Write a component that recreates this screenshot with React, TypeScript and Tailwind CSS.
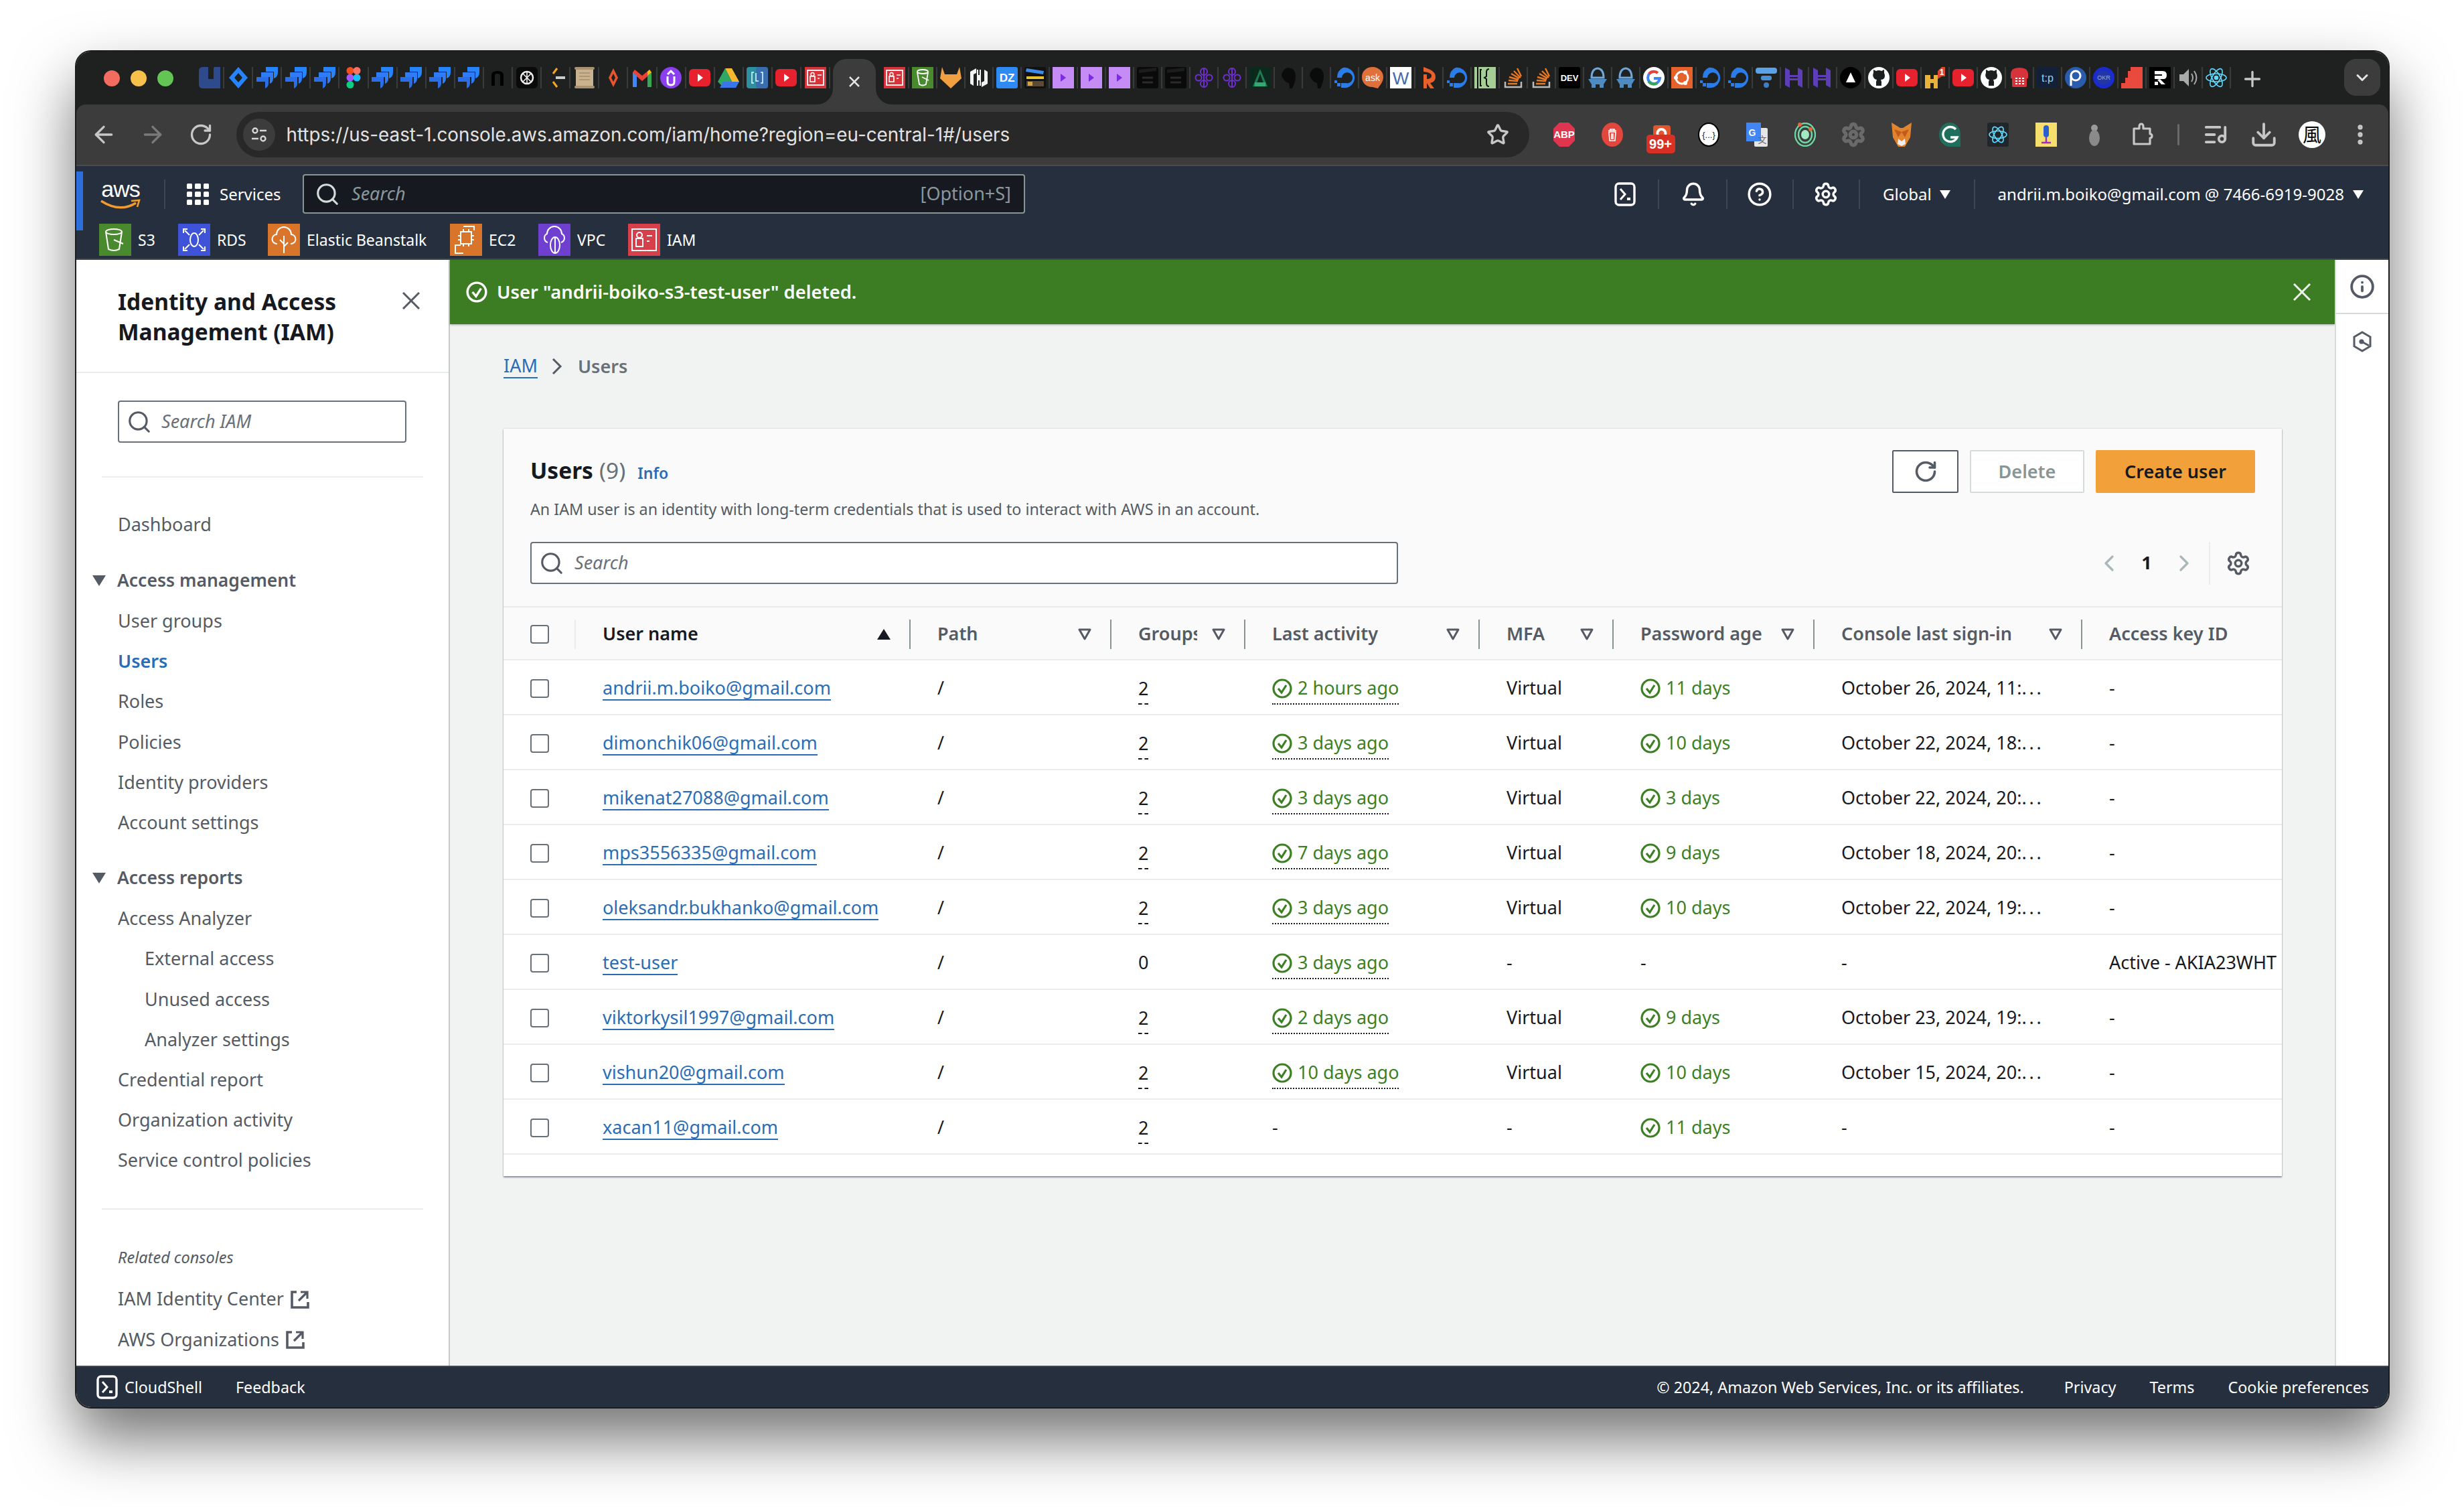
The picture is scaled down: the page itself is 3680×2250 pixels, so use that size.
import React from "react";
import { ArrowLeft, ArrowRight, RotateCw, Star, Download, ListMusic, MoreVertical, ChevronDown, Plus, Search, Bell, CircleHelp, Settings, ChevronLeft, ChevronRight, Info } from "lucide-react";

const ui = { fontFamily: '"Noto Sans", sans-serif' };

const Rect = ({ c, r = 0 }: { c: string; r?: number }) => <rect x="0" y="0" width="32" height="32" rx={r} fill={c} />;

function Fav({ k }: { k: string }) {
  const t = (s: string, size: number, fill: string, x = 16, y = 22, w = 700) => (
    <text x={x} y={y} fontSize={size} fill={fill} fontWeight={w} textAnchor="middle" fontFamily="Liberation Sans, sans-serif">{s}</text>
  );
  let body: React.ReactNode = null;
  switch (k) {
    case "linear": body = <path d="M0 6q0-6 6-6h8v18h8V2q0-2 2-2h8v32H6q-6 0-6-6z" fill="#2f4a8a" />; break;
    case "diamond": body = <><path d="M16 0l14 16-14 16L2 16z" fill="#2684ff" /><path d="M16 9l6 7-6 7-6-7z" fill="#1f2120" /></>; break;
    case "jira": body = <><path d="M14 0h18v8q0 7-6 9V7H14z" fill="#2684ff" /><path d="M7 8h18v9q0 6-5 8V15H7z" fill="#2f7cf6" /><path d="M0 15h18v9q0 6-5 8V22H0z" fill="#2a6fe8" /></>; break;
    case "figma": body = <><circle cx="11" cy="5.5" r="5.5" fill="#f24e1e" /><circle cx="21" cy="5.5" r="5.5" fill="#ff7262" /><circle cx="11" cy="16" r="5.5" fill="#a259ff" /><circle cx="21" cy="16" r="5.5" fill="#1abcfe" /><circle cx="11" cy="26.5" r="5.5" fill="#0acf83" /></>; break;
    case "notion": body = <path d="M7 28V12q0-6 9-6t9 6v16h-5V12q0-2-4-2t-4 2v16z" fill="#000" />; break;
    case "gpt": body = <><Rect c="#0a0a0a" r={6} /><circle cx="16" cy="16" r="9" fill="none" stroke="#eee" strokeWidth="2.5" /><path d="M10 10l12 12M22 10L10 22M16 7v18" stroke="#eee" strokeWidth="1.6" /></>; break;
    case "brack": body = <><path d="M10 2L3 16l7 14" fill="none" stroke="#222" strokeWidth="2" /><path d="M18 2l-6 8M18 30l-6-8" stroke="#f5a623" strokeWidth="3" /><rect x="16" y="14" width="14" height="4" fill="#ccc" /></>; break;
    case "scroll": body = <><rect x="3" y="2" width="26" height="28" fill="#c9b28f" /><rect x="1" y="0" width="30" height="4" rx="2" fill="#a89270" /><rect x="1" y="28" width="30" height="4" rx="2" fill="#a89270" /><path d="M8 9h16M8 14h16M8 19h16" stroke="#a68d68" strokeWidth="1.5" /></>; break;
    case "star4": body = <><path d="M16 2l7 14-7 14-7-14z" fill="#e8552c" /><path d="M16 10l3 6-3 6-3-6z" fill="#1f2120" /></>; break;
    case "gmail": body = <><path d="M2 8v22h6V14l8 7 8-7v16h6V8l-3-4-11 9L5 4z" fill="#ea4335" /><path d="M2 8v22h6V13z" fill="#4285f4" /><path d="M30 8v22h-6V13z" fill="#34a853" /><path d="M24 13l6-5-3-4-3 3z" fill="#fbbc04" /></>; break;
    case "upw": body = <><circle cx="16" cy="16" r="16" fill="#8a3ff0" /><path d="M11 14v8q0 5 5 5t5-5v-8M11 11l5-5 5 5" fill="none" stroke="#fff" strokeWidth="3" /></>; break;
    case "yt": body = <><rect x="0" y="3" width="32" height="26" rx="6" fill="#e8212f" /><path d="M13 10l8 6-8 6z" fill="#fff" /></>; break;
    case "drive": body = <><path d="M11 2h10l11 20H21z" fill="#f6b82d" /><path d="M11 2l10 20-5 9H9L0 22z" fill="#2fa866" /><path d="M8 22h24l-5 9H3z" fill="#3a76e8" /></>; break;
    case "lk": body = <><rect width="32" height="32" rx="4" fill="#2c8e9e" /><rect x="14" width="18" height="32" rx="4" fill="#3f5fb8" opacity=".7" /><path d="M11 8H8v16h3M21 8h3v16h-3M14 9v12h4" fill="none" stroke="#dff" strokeWidth="1.5" /></>; break;
    case "iam": body = <><Rect c="#d6333a" /><rect x="4" y="5" width="24" height="22" fill="none" stroke="#fff" strokeWidth="1.8" /><rect x="8" y="14" width="7" height="8" fill="none" stroke="#fff" strokeWidth="1.6" /><circle cx="11.5" cy="11" r="2.5" fill="none" stroke="#fff" strokeWidth="1.4" /><path d="M19 12h6M19 17h3" stroke="#fff" strokeWidth="1.6" /></>; break;
    case "s3": body = <><Rect c="#4a8a2e" /><path d="M8 8l3 18q5 3 10 0l3-18" fill="none" stroke="#fff" strokeWidth="1.8" /><ellipse cx="16" cy="7" rx="8" ry="3" fill="none" stroke="#fff" strokeWidth="1.8" /><path d="M15 15l10 5" stroke="#fff" strokeWidth="1.4" /></>; break;
    case "gitlab": body = <path d="M3 0l4 11h18l4-11 3 17-16 15L0 17z" fill="#f0a040" />; break;
    case "hashi": body = <><path d="M12 2L3 7v18l5 3V11l4-2zM20 30l9-5V7l-5-3v17l-4 2z" fill="#f2f2f2" /><path d="M13 12h6v8h-6z" fill="#f2f2f2" /><path d="M14 4v24M18 4v24" stroke="#f2f2f2" strokeWidth="2" /></>; break;
    case "dz": body = <><Rect c="#2e8bf5" r={3} />{t("DZ", 17, "#fff", 16, 22)}</>; break;
    case "clap": body = <><rect width="32" height="32" rx="3" fill="#111" /><path d="M3 2l26 4-1 5-26-4z" fill="#3d8bea" /><rect x="3" y="14" width="26" height="4" fill="#e8c231" /><rect x="3" y="21" width="26" height="8" fill="#5b4a36" /><rect x="5" y="22" width="7" height="6" fill="#d9a13a" /></>; break;
    case "play": body = <><Rect c="#c58cf5" /><path d="M12 10l8 6-8 6z" fill="#7b2be0" /></>; break;
    case "clapb": body = <><rect width="32" height="32" rx="3" fill="#0a0a0a" /><path d="M3 4l26-3v5L3 9z" fill="#1c1c1c" /><path d="M8 16h16M8 23h16" stroke="#2a2a2a" strokeWidth="3" /></>; break;
    case "clover": body = <><g fill="none" stroke="#6f2fd0" strokeWidth="2"><circle cx="16" cy="7" r="5" /><circle cx="16" cy="25" r="5" /><circle cx="8" cy="16" r="4.5" /><circle cx="24" cy="16" r="4.5" /><path d="M16 1v30" /></g></>; break;
    case "gree": body = <><Rect c="#0b2a1d" /><path d="M16 3l11 26H5z" fill="#1f7a50" /><path d="M16 10l5 14H11z" fill="#0b2a1d" /><rect x="8" y="23" width="16" height="6" fill="#35a873" /></>; break;
    case "hood": body = <path d="M16 1q11 1 11 13 0 7-5 18h-4l-1-8-5-2q-6-7-6-10Q8 2 16 1z" fill="#0b0b0b" />; break;
    case "do": body = <path d="M14 1a15 15 0 1 1 4 30v-7a8 8 0 1 0-6-8H5q0-11 9-15zM11 24h7v7h-7zM5 24h5v5H5zM1 20h4v4H1z" fill="#2a7de8" />; break;
    case "ask": body = <><path d="M16 0c9 0 16 7 16 15s-6 13-8 17l-8-2C7 30 0 24 0 15S7 0 16 0z" fill="#e2703a" />{t("ask", 14, "#fff", 16, 21, 400)}</>; break;
    case "w": body = <><Rect c="#fff" />{t("W", 26, "#4169b0", 16, 26, 400)}</>; break;
    case "r": body = <path d="M8 0l10 4q8 4 8 11t-8 9l6 8h-6l-5-8v-6q6 0 7-4t-6-6L8 7zM8 11h5v21H8z" fill="#e9602a" />; break;
    case "bk": body = <><Rect c="#a5cd96" /><path d="M5 0v32M11 4H9v24h2M22 3q-4 0-4 5v6l-3 2 3 2v6q0 5 4 5" fill="none" stroke="#111" strokeWidth="2" /></>; break;
    case "so": body = <><path d="M4 22v8h24v-8" fill="none" stroke="#bbb" strokeWidth="2.5" /><path d="M8 25h14M9 20l14 1M10 15l14 4M13 10l12 7M17 6l10 10M22 2l6 12" stroke="#e87922" strokeWidth="2.4" /></>; break;
    case "dev": body = <><Rect c="#000" r={3} />{t("DEV", 13, "#fff", 16, 21)}</>; break;
    case "ship": body = <><path d="M16 2q9 1 9 14H7Q7 3 16 2z" fill="none" stroke="#6fa7d8" strokeWidth="3" /><path d="M2 18h28l-5 8H7z" fill="#4f8ac0" /><path d="M7 26h6v5H7zM19 26h6v5h-6z" fill="#4f8ac0" /></>; break;
    case "g": body = <><circle cx="16" cy="16" r="16" fill="#fff" /><path d="M16 7a9 9 0 1 0 9 10h-9" fill="none" stroke="#4285f4" strokeWidth="4" /><path d="M9 10a9 9 0 0 1 13-1" fill="none" stroke="#ea4335" strokeWidth="4" /><path d="M8 21a9 9 0 0 0 13 3" fill="none" stroke="#34a853" strokeWidth="4" /></>; break;
    case "ubuntu": body = <><Rect c="#e5622c" /><circle cx="16" cy="16" r="9" fill="none" stroke="#fff" strokeWidth="3" /><circle cx="7" cy="16" r="3" fill="#fff" /><circle cx="21" cy="8" r="3" fill="#fff" /><circle cx="21" cy="24" r="3" fill="#fff" /></>; break;
    case "filter": body = <><rect x="0" y="1" width="32" height="9" rx="4" fill="#5aa3e8" /><rect x="8" y="13" width="16" height="7" rx="3" fill="#4a8fd8" /><circle cx="16" cy="27" r="4" fill="#3f7fc8" /></>; break;
    case "hh": body = <path d="M2 1l7 4v7h12V1l7 4v26l-7-4v-7H9v11l-7-4zM9 15v2h12v-2z" fill="#5c3fb8" />; break;
    case "tri": body = <><circle cx="16" cy="16" r="16" fill="#000" /><path d="M16 8l7 15H9z" fill="#fff" /></>; break;
    case "gh": body = <><circle cx="16" cy="16" r="16" fill="#fff" /><path d="M16 5q-2 0-4 1l-4-2v5q-2 4 1 8 2 2 4 2l-1 3v6h8v-6l-1-3q3 0 5-2 2-4 0-8V4l-4 2q-2-1-4-1z" fill="#1b1f1f" /></>; break;
    case "hpix": body = <><path d="M1 12h8v6h5v-6h6v20h-6v-8H9v8H1z" fill="#e9b23c" /><path d="M20 6l6-6h5v14h-5l-6 4z" fill="#d9482f" />{t("1", 12, "#fff", 26, 12)}</>; break;
    case "phone": body = <><path d="M3 11Q3 1 16 1t13 10v6H3z" fill="#d6333a" /><rect x="5" y="14" width="22" height="16" rx="2" fill="#d6333a" /><path d="M10 17h3M15 17h3M20 17h3M10 21h3M15 21h3M20 21h3M10 25h3M15 25h3M20 25h3" stroke="#fff" strokeWidth="2" /></>; break;
    case "tp": body = <><Rect c="#122038" r={4} />{t("t:p", 16, "#8fd6e8", 16, 22, 400)}</>; break;
    case "p": body = <><circle cx="16" cy="16" r="16" fill="#2a5cab" /><circle cx="16" cy="13" r="7" fill="none" stroke="#fff" strokeWidth="3" /><path d="M9 13v15" stroke="#fff" strokeWidth="3" /></>; break;
    case "okr": body = <><circle cx="16" cy="16" r="16" fill="#1a2bd0" /><circle cx="16" cy="16" r="11" fill="#2236a8" />{t("OKR", 9, "#9ad", 16, 19, 400)}</>; break;
    case "redp": body = <path d="M14 0h18v32H0v-8h6v-8h4V6h4z" fill="#ea4a3e" />; break;
    case "rb": body = <><Rect c="#000" /><path d="M8 6h12q6 0 6 6t-5 6H8v-5h11v-2H8zM16 18l8 8h-6l-6-7zM8 22h5v5H8z" fill="#fff" /></>; break;
    case "speak": body = <><path d="M3 11h6l8-8v26l-8-8H3z" fill="#aaa" /><path d="M21 10q4 6 0 12M25 6q7 10 0 20" fill="none" stroke="#aaa" strokeWidth="2" /></>; break;
    case "react": body = <g fill="none" stroke="#61dafb" strokeWidth="1.6"><ellipse cx="16" cy="16" rx="15" ry="6" /><ellipse cx="16" cy="16" rx="15" ry="6" transform="rotate(60 16 16)" /><ellipse cx="16" cy="16" rx="15" ry="6" transform="rotate(120 16 16)" /><circle cx="16" cy="16" r="2.5" fill="#61dafb" /></g>; break;
  }
  return <svg width="32" height="32" viewBox="0 0 32 32" className="block shrink-0">{body}</svg>;
}

const leftTabs = "linear diamond jira jira jira figma jira jira jira jira notion gpt brack scroll star4 gmail upw yt drive lk yt iam".split(" ");
const rightTabs = "iam s3 gitlab hashi dz clap play play play clapb clapb clover clover gree hood hood do ask w r do bk so so dev ship ship g ubuntu do do filter hh hh tri gh yt hpix yt gh phone tp p okr redp rb speak react".split(" ");

function TabCell({ k, wide }: { k: string; wide?: boolean }) {
  return (
    <div className={`${wide ? "w-[43.1px]" : "w-[42px]"} h-[32px] shrink-0 flex items-center justify-center relative`}>
      <Fav k={k} />
      <div className="w-[2px] h-[32px] bg-[#3a3c3c] absolute -right-[1px] top-0" />
    </div>
  );
}

const Ext = ({ children }: { children: React.ReactNode }) => (
  <div className="w-[72px] h-[48px] shrink-0 flex items-center justify-center relative">{children}</div>
);

const XIcon = ({ size, color, sw = 3 }: { size: number; color: string; sw?: number }) => (
  <svg width={size} height={size} viewBox={`0 0 ${size} ${size}`} className="shrink-0">
    <path d={`M1 1L${size - 1} ${size - 1}M${size - 1} 1L1 ${size - 1}`} stroke={color} strokeWidth={sw} fill="none" />
  </svg>
);

const ShellIcon = () => (
  <svg width="32" height="36" viewBox="0 0 32 36" className="shrink-0">
    <rect x="2" y="2" width="28" height="32" rx="5" fill="none" stroke="#fff" strokeWidth="3.4" />
    <path d="M9 10l7 8-7 8" fill="none" stroke="#fff" strokeWidth="3" />
    <rect x="19" y="23" width="5" height="4" fill="#fff" />
  </svg>
);

function Extensions() {
  return (
    <>
      <Ext><svg width="32" height="36" viewBox="0 0 32 36"><path d="M9 0h14l9 9v18l-9 9H9l-9-9V9z" fill="#e0354f" /><text x="16" y="23" fontSize="15" fontWeight="700" fill="#fff" textAnchor="middle" fontFamily="Liberation Sans">ABP</text></svg></Ext>
      <Ext><svg width="32" height="36" viewBox="0 0 32 36"><ellipse cx="16" cy="18" rx="16" ry="18" fill="#e2463c" /><path d="M10 12h12M13 12v-2h6v2M11 14l1 13h8l1-13zM15 16v9M17 16v9" fill="none" stroke="#fff" strokeWidth="1.6" /></svg></Ext>
      <Ext>
        <svg width="26" height="22" viewBox="0 0 26 22" className="absolute top-[10px] left-[25px]"><rect width="26" height="22" rx="4" fill="#e2562f" /><path d="M18 14a6 6 0 1 0-10 2" fill="none" stroke="#fff" strokeWidth="4" /></svg>
        <span className="absolute top-[24px] left-[15px] h-[28px] w-[43px] bg-[#d93025] rounded-[5px] text-white text-[20px] font-bold leading-[28px] text-center" style={{ fontFamily: "Liberation Sans, sans-serif" }}>99+</span>
      </Ext>
      <Ext><svg width="32" height="36" viewBox="0 0 32 36"><ellipse cx="16" cy="18" rx="15" ry="17" fill="#fff" stroke="#000" strokeWidth="2" /><text x="16" y="23" fontSize="13" textAnchor="middle" fill="#222" fontFamily="Liberation Sans">{"{...}"}</text></svg></Ext>
      <Ext><svg width="32" height="36" viewBox="0 0 32 36"><rect x="12" y="8" width="20" height="28" rx="2" fill="#e6e6e6" /><path d="M0 0h22v28H8v0H0z" fill="#4285f4" /><text x="9" y="20" fontSize="14" fontWeight="700" fill="#fff" textAnchor="middle" fontFamily="Liberation Sans">G</text><text x="24" y="30" fontSize="13" fill="#666" textAnchor="middle" fontFamily="Noto Sans CJK SC">文</text></svg></Ext>
      <Ext><svg width="32" height="36" viewBox="0 0 32 36"><g fill="none" stroke="#6fd7a6" strokeWidth="2.4"><ellipse cx="16" cy="18" rx="15" ry="17" /><ellipse cx="16" cy="18" rx="10" ry="12" /></g><ellipse cx="16" cy="18" rx="6" ry="7" fill="#a3e8c3" /><circle cx="8" cy="3" r="3" fill="#e26a3e" /><circle cx="24" cy="10" r="3" fill="#e26a3e" /></svg></Ext>
      <Ext><Settings size={38} strokeWidth={3.4} className="text-[#6a6a6a]" /></Ext>
      <Ext><svg width="32" height="36" viewBox="0 0 32 36"><path d="M1 0l13 8h4l13-8-2 22-8 14H11L3 22z" fill="#e2832d" /><path d="M11 24l5 4 5-4 1 8-6 3-6-3z" fill="#eee" /><path d="M5 10l6 12 5-8zM27 10l-6 12-5-8z" fill="#c05b1c" /></svg></Ext>
      <Ext><svg width="32" height="36" viewBox="0 0 32 36"><path d="M16 0a16 18 0 1 0 0 36h16V18A16 18 0 0 0 16 0z" fill="#1f6f5c" /><path d="M25 10a11 11 0 1 0 2 12h-10" fill="none" stroke="#fff" strokeWidth="3.4" /></svg></Ext>
      <Ext><svg width="32" height="36" viewBox="0 0 32 36"><rect width="32" height="36" rx="3" fill="#20262b" /><g fill="none" stroke="#61dafb" strokeWidth="1.6"><ellipse cx="16" cy="18" rx="13" ry="5.5" /><ellipse cx="16" cy="18" rx="13" ry="5.5" transform="rotate(60 16 18)" /><ellipse cx="16" cy="18" rx="13" ry="5.5" transform="rotate(120 16 18)" /></g></svg></Ext>
      <Ext><svg width="32" height="36" viewBox="0 0 32 36"><rect width="32" height="36" fill="#f7df6e" /><rect x="12" y="4" width="8" height="18" rx="4" fill="#2a5fd0" /><path d="M16 22v8M9 30h14" stroke="#a02bc0" strokeWidth="2.5" /></svg></Ext>
      <Ext><svg width="32" height="36" viewBox="0 0 32 36"><circle cx="16" cy="8" r="5" fill="#9a9a9a" /><ellipse cx="16" cy="23" rx="8" ry="12" fill="#8a8a8a" /></svg></Ext>
      <Ext><svg width="32" height="36" viewBox="0 0 32 36"><path d="M3 9h8V6q0-4 3-4t3 4v3h10v8q3 0 3 3t-3 3v9H3z" fill="none" stroke="#c7c7c7" strokeWidth="3.2" strokeLinejoin="round" /></svg></Ext>
      <div className="w-[3px] h-[32px] bg-[#6a6a6a] ml-[16px] mr-[18px] shrink-0 rounded-full" />
      <Ext><ListMusic size={38} strokeWidth={2.4} className="text-[#c7c7c7]" /></Ext>
      <Ext><Download size={42} strokeWidth={2.2} className="text-[#c7c7c7]" /></Ext>
      <Ext><svg width="40" height="40" viewBox="0 0 40 40"><circle cx="20" cy="20" r="20" fill="#fff" /><text x="20" y="31" fontSize="28" fill="#000" textAnchor="middle" fontFamily="Noto Sans CJK SC">風</text></svg></Ext>
      <Ext><MoreVertical size={38} strokeWidth={2.6} className="text-[#c7c7c7]" /></Ext>
    </>
  );
}

function Svc({ color, label, w, kind }: { color: string; label: string; w: string; kind: string }) {
  return (
    <div className={`flex items-center shrink-0 ${w}`}>
      <svg width="48" height="48" viewBox="0 0 48 48" className="shrink-0">
        <rect width="48" height="48" fill={color} />
        <g fill="none" stroke="#fff" strokeWidth="2">
          {kind === "s3" && <><ellipse cx="22" cy="12" rx="12" ry="4" /><path d="M10 12l4 26q8 4 16 0l4-26M22 24l14 6" /></>}
          {kind === "rds" && <><ellipse cx="24" cy="24" rx="6" ry="10" /><path d="M8 14V8h6M40 14V8h-6M8 34v6h6M40 34v6h-6M10 10l7 7M38 10l-7 7M10 38l7-7M38 38l-7-7" /></>}
          {kind === "eb" && <><path d="M14 30a7 7 0 0 1-1-14 11 11 0 0 1 22 0 7 7 0 0 1-1 14" /><path d="M24 44V18M24 30l-6-6M24 34l6-6" /></>}
          {kind === "ec2" && <><rect x="16" y="12" width="16" height="18" /><path d="M20 4h16v6M20 44H8V32h8M20 12V8M28 12V8M20 34v-4M28 34v-4M12 18h4M12 24h4M32 18h4M32 24h4" /></>}
          {kind === "vpc" && <><path d="M14 28a7 7 0 0 1-1-13 11 11 0 0 1 22 0 7 7 0 0 1-1 13" /><ellipse cx="25" cy="32" rx="7" ry="12" /><path d="M25 20v24" /></>}
          {kind === "iam" && <><rect x="6" y="8" width="36" height="32" /><rect x="12" y="22" width="10" height="12" /><circle cx="17" cy="17" r="4" /><path d="M28 18h8M28 26h4" /></>}
        </g>
      </svg>
      <span className="ml-[10px] text-[23px] text-white leading-none whitespace-nowrap">{label}</span>
    </div>
  );
}

const Sep = ({ ml, mr }: { ml: string; mr: string }) => <div className={`w-[2px] h-[44px] bg-[#414750] shrink-0 ${ml} ${mr}`} />;

function TopNav() {
  return (
    <div className="h-[140px] shrink-0 bg-[#262f3e] border-b-2 border-[#414750] relative" style={ui}>
      <div className="absolute left-0 top-[8px] w-[10px] h-[88px] bg-[#2a6fdb]" />
      <div className="h-[76px] flex items-start pt-[12px]">
        <div className="w-[133px] h-[60px] flex items-center shrink-0 pl-[36px] relative">
          <div className="w-[60px] h-[46px] flex flex-col items-center">
            <span className="text-[34px] leading-[30px] text-white tracking-[-1px]" style={{ fontFamily: "Liberation Sans, sans-serif" }}>aws</span>
            <svg width="60" height="16" viewBox="0 0 60 16"><path d="M1 3q28 18 52 3" fill="none" stroke="#f39c2d" strokeWidth="3.4" /><path d="M46 3l12-1-3 10" fill="none" stroke="#f39c2d" strokeWidth="2.6" /></svg>
          </div>
          <div className="absolute right-0 top-[8px] w-[2px] h-[44px] bg-[#414750]" />
        </div>
        <div className="h-[60px] flex items-center ml-[32px] w-[173px] shrink-0">
          <div className="grid grid-cols-3 gap-[4px] w-[33px] shrink-0">
            {Array.from({ length: 9 }).map((_, i) => <div key={i} className="h-[8px] bg-white rounded-[1.5px]" />)}
          </div>
          <span className="ml-[16px] text-[24px] text-white">Services</span>
        </div>
        <div className="w-[1079px] h-[59px] bg-[#161a20] border-2 border-[#879596] rounded-[4px] flex items-center shrink-0 pl-[16px] pr-[19px]">
          <Search size={38} strokeWidth={2} className="text-[#d5dbdb]" />
          <span className="ml-[17px] italic text-[27px] text-[#8b979c]">Search</span>
          <span className="ml-auto text-[27px] text-[#8b979c]">[Option+S]</span>
        </div>
        <div className="h-[60px] flex items-center flex-1 text-white text-[24px]">
          <div className="ml-[880px] flex shrink-0"><ShellIcon /></div>
          <Sep ml="ml-[33px]" mr="mr-[32px]" />
          <Bell size={38} strokeWidth={2.2} className="shrink-0" />
          <Sep ml="ml-[30px]" mr="mr-[29px]" />
          <CircleHelp size={38} strokeWidth={2.2} className="shrink-0" />
          <Sep ml="ml-[30px]" mr="mr-[29px]" />
          <Settings size={38} strokeWidth={2.2} className="shrink-0" />
          <Sep ml="ml-[30px]" mr="mr-[34px]" />
          <span>Global</span>
          <div className="ml-[12px] w-0 h-0 border-l-[8px] border-r-[8px] border-t-[13px] border-l-transparent border-r-transparent border-t-white" />
          <Sep ml="ml-[35px]" mr="mr-[34px]" />
          <span className="whitespace-nowrap">andrii.m.boiko@gmail.com @ 7466-6919-9028</span>
          <div className="ml-[13px] w-0 h-0 border-l-[8px] border-r-[8px] border-t-[13px] border-l-transparent border-r-transparent border-t-white" />
        </div>
      </div>
      <div className="h-[62px] flex items-start pt-[10px] pl-[34px]">
        <Svc color="#4a8a2e" label="S3" w="w-[118px]" kind="s3" />
        <Svc color="#3f53d9" label="RDS" w="w-[134px]" kind="rds" />
        <Svc color="#d9752b" label="Elastic Beanstalk" w="w-[272px]" kind="eb" />
        <Svc color="#d9752b" label="EC2" w="w-[132px]" kind="ec2" />
        <Svc color="#6f3fd0" label="VPC" w="w-[134px]" kind="vpc" />
        <Svc color="#d6404a" label="IAM" w="w-[120px]" kind="iam" />
      </div>
    </div>
  );
}

const Item = ({ children, pl = "pl-[62px]", cls = "text-[#545b64]" }: { children: React.ReactNode; pl?: string; cls?: string }) => (
  <div className={`h-[60.2px] flex items-center ${pl} text-[27px] ${cls} whitespace-nowrap`}>{children}</div>
);

const Heading = ({ children, mt }: { children: React.ReactNode; mt: string }) => (
  <div className={`h-[60px] flex items-center pl-[24px] ${mt} text-[26.5px] font-semibold text-[#545b64]`}>
    <div className="w-0 h-0 border-l-[10px] border-r-[10px] border-t-[16px] border-l-transparent border-r-transparent border-t-[#545b64]" />
    <span className="ml-[17px]">{children}</span>
  </div>
);

const ExtLink = () => (
  <svg width="28" height="28" viewBox="0 0 28 28" className="ml-[10px] shrink-0"><path d="M9 3H2v23h24v-8" fill="none" stroke="#545b64" strokeWidth="3.6" /><path d="M12 16L24 4M15 3h10v10" fill="none" stroke="#545b64" strokeWidth="3.2" /></svg>
);

function Sidebar() {
  return (
    <aside className="w-[558px] shrink-0 bg-white border-r-2 border-[#c6c9c9]">
      <div className="h-[169px] border-b-2 border-[#eaeded] pl-[62px] pt-[40px] pr-[43px] flex items-start justify-between">
        <div className="text-[33.5px] leading-[45px] font-bold text-[#16191f]">Identity and Access<br />Management (IAM)</div>
        <div className="mt-[8px]"><XIcon size={26} color="#545b64" /></div>
      </div>
      <div className="ml-[62px] mt-[41px] w-[431px] h-[63px] border-2 border-[#687078] rounded-[4px] flex items-center pl-[11px]">
        <Search size={38} strokeWidth={2} className="text-[#545b64]" />
        <span className="ml-[14px] italic text-[27px] text-[#687078]">Search IAM</span>
      </div>
      <div className="ml-[38px] mt-[50px] w-[480px] h-[2px] bg-[#eaeded]" />
      <div className="mt-[40px]"><Item>Dashboard</Item></div>
      <Heading mt="mt-[24px]">Access management</Heading>
      <Item>User groups</Item>
      <Item cls="font-semibold text-[#2a6db5]">Users</Item>
      <Item>Roles</Item>
      <Item>Policies</Item>
      <Item>Identity providers</Item>
      <Item>Account settings</Item>
      <Heading mt="mt-[23px]">Access reports</Heading>
      <Item>Access Analyzer</Item>
      <Item pl="pl-[102px]">External access</Item>
      <Item pl="pl-[102px]">Unused access</Item>
      <Item pl="pl-[102px]">Analyzer settings</Item>
      <Item>Credential report</Item>
      <Item>Organization activity</Item>
      <Item>Service control policies</Item>
      <div className="ml-[38px] mt-[41px] w-[480px] h-[2px] bg-[#eaeded]" />
      <div className="mt-[52px] ml-[62px] h-[40px] flex items-center italic text-[23.5px] text-[#545b64]">Related consoles</div>
      <div className="mt-[12px]"><Item>IAM Identity Center<ExtLink /></Item></div>
      <Item>AWS Organizations<ExtLink /></Item>
    </aside>
  );
}

const CheckIcon = ({ size = 30, color = "#3d7f23" }: { size?: number; color?: string }) => (
  <svg width={size} height={size} viewBox="0 0 30 30" className="shrink-0">
    <circle cx="15" cy="15" r="13" fill="none" stroke={color} strokeWidth="3.2" />
    <path d="M9 15l5 6 7-11" fill="none" stroke={color} strokeWidth="3.2" />
  </svg>
);

const Filter = () => (
  <svg width="20" height="18" viewBox="0 0 20 18" className="shrink-0"><path d="M2 2h16l-8 14z" fill="none" stroke="#545b64" strokeWidth="3" strokeLinejoin="round" /></svg>
);

const grid = "grid grid-cols-[108px_500px_300px_200px_350px_200px_300px_400px_298px]";

function HeadCell({ label, filter, dark, clip, sep = true }: { label: string; filter?: boolean; dark?: boolean; clip?: boolean; sep?: boolean }) {
  return (
    <div className="relative h-full flex items-center pl-[40px] pr-[30px]">
      <span className={`text-[27px] font-semibold whitespace-nowrap ${dark ? "text-[#16191f]" : "text-[#545b64]"} ${clip ? "w-[88px] overflow-hidden" : ""}`}>{label}</span>
      {filter && <div className="ml-auto"><Filter /></div>}
      {dark && <div className="ml-auto w-0 h-0 border-l-[10px] border-r-[10px] border-b-[16px] border-l-transparent border-r-transparent border-b-[#16191f]" />}
      {sep && <div className="absolute right-0 top-[16px] w-[2px] h-[44px] bg-[#879596]" />}
    </div>
  );
}

const CB = () => <div className="w-[28px] h-[28px] bg-white border-2 border-[#687078] rounded-[4px]" />;

const rows: [string, string, string, string, string, string, string][] = [
  ["andrii.m.boiko@gmail.com", "2 hours ago", "2", "Virtual", "11 days", "October 26, 2024, 11:", "-"],
  ["dimonchik06@gmail.com", "3 days ago", "2", "Virtual", "10 days", "October 22, 2024, 18:", "-"],
  ["mikenat27088@gmail.com", "3 days ago", "2", "Virtual", "3 days", "October 22, 2024, 20:", "-"],
  ["mps3556335@gmail.com", "7 days ago", "2", "Virtual", "9 days", "October 18, 2024, 20:", "-"],
  ["oleksandr.bukhanko@gmail.com", "3 days ago", "2", "Virtual", "10 days", "October 22, 2024, 19:", "-"],
  ["test-user", "3 days ago", "0", "-", "-", "-", "Active - AKIA23WHT"],
  ["viktorkysil1997@gmail.com", "2 days ago", "2", "Virtual", "9 days", "October 23, 2024, 19:", "-"],
  ["vishun20@gmail.com", "10 days ago", "2", "Virtual", "10 days", "October 15, 2024, 20:", "-"],
  ["xacan11@gmail.com", "-", "2", "-", "11 days", "-", "-"],
];

function Row({ r }: { r: (typeof rows)[number] }) {
  const [name, act, grp, mfa, pw, sign, key] = r;
  const cell = "flex items-center pl-[40px] whitespace-nowrap";
  return (
    <div className={`${grid} h-[82px] pt-[3px] border-b-2 border-[#eaeded] text-[27px] text-[#16191f] bg-white`}>
      <div className={cell}><CB /></div>
      <div className={cell}><span className="text-[#2a6db5] border-b-2 border-[#2a6db5] leading-[34px]">{name}</span></div>
      <div className={cell}>/</div>
      <div className={cell}>{grp === "0" ? <span>0</span> : <span className="border-b-2 border-dashed border-[#16191f] leading-[44px] h-[48px] pt-[2px]">{grp}</span>}</div>
      <div className={cell}>
        {act === "-" ? <span>-</span> : (
          <span className="flex items-center gap-[8px] text-[#3d7f23] border-b-2 border-dotted border-[#16191f] h-[48px] pt-[2px]"><CheckIcon />{act}</span>
        )}
      </div>
      <div className={cell}>{mfa}</div>
      <div className={cell}>{pw === "-" ? "-" : <span className="flex items-center gap-[8px] text-[#3d7f23]"><CheckIcon />{pw}</span>}</div>
      <div className={cell}>{sign}{sign !== "-" && <span className="tracking-[3.8px]">...</span>}</div>
      <div className={`${cell} overflow-hidden`}>{key}</div>
    </div>
  );
}

function Card() {
  return (
    <section className="w-[2656px] ml-[80px] mt-[63px] bg-white shadow-[0_2px_2px_rgba(60,70,80,0.55),0_0_2px_rgba(60,70,80,0.25)]">
      <div className="h-[265px] bg-[#fafafa] px-[40px] pt-[32px]">
        <div className="flex items-center justify-between h-[64px]">
          <div className="flex items-baseline -mt-[3px]">
            <span className="text-[33.5px] font-bold text-[#16191f]">Users</span>
            <span className="ml-[9px] text-[33.5px] text-[#687078]">(9)</span>
            <span className="ml-[18px] text-[23px] font-semibold text-[#2a6db5]">Info</span>
          </div>
          <div className="flex gap-[17px]">
            <div className="w-[99px] h-[64px] bg-white border-2 border-[#545b64] rounded-[2px] flex items-center justify-center"><RotateCw size={36} strokeWidth={2.4} className="text-[#545b64]" /></div>
            <div className="w-[171px] h-[64px] bg-white border-2 border-[#d5dbdb] rounded-[2px] flex items-center justify-center text-[27px] font-semibold text-[#879596]">Delete</div>
            <div className="w-[238px] h-[64px] bg-[#f2a03a] rounded-[2px] flex items-center justify-center text-[27px] font-semibold text-[#16191f]">Create user</div>
          </div>
        </div>
        <div className="mt-[6px] h-[36px] flex items-center text-[23.25px] text-[#545b64]">An IAM user is an identity with long-term credentials that is used to interact with AWS in an account.</div>
        <div className="mt-[31px] flex items-center h-[63px]">
          <div className="w-[1296px] h-[63px] bg-white border-2 border-[#687078] rounded-[4px] flex items-center pl-[11px]">
            <Search size={38} strokeWidth={2} className="text-[#545b64]" />
            <span className="ml-[15px] italic text-[27px] text-[#687078]">Search</span>
          </div>
          <div className="ml-auto flex items-center mr-[6px]">
            <ChevronLeft size={40} strokeWidth={2} className="text-[#aab7b8]" />
            <span className="mx-[28px] w-[16px] text-center text-[27px] font-bold text-[#16191f]">1</span>
            <ChevronRight size={40} strokeWidth={2} className="text-[#aab7b8]" />
            <div className="ml-[17px] w-[2px] h-[64px] bg-[#eaeded]" />
            <Settings size={38} strokeWidth={2.2} className="ml-[23px] text-[#545b64]" />
          </div>
        </div>
      </div>
      <div className={`${grid} h-[81px] pt-[2px] bg-[#fafafa] border-t-2 border-b-2 border-[#eaeded]`}>
        <div className="relative flex items-center pl-[40px]"><CB /><div className="absolute right-0 top-[16px] w-[2px] h-[44px] bg-[#eaeded]" /></div>
        <HeadCell label="User name" dark />
        <HeadCell label="Path" filter />
        <HeadCell label="Groups" filter clip />
        <HeadCell label="Last activity" filter />
        <HeadCell label="MFA" filter />
        <HeadCell label="Password age" filter />
        <HeadCell label="Console last sign-in" filter />
        <HeadCell label="Access key ID" sep={false} />
      </div>
      {rows.map((r) => <Row key={r[0]} r={r} />)}
      <div className="h-[32px] bg-white" />
    </section>
  );
}

export default function App() {
  return (
    <div className="w-[3680px] h-[2250px] bg-white overflow-hidden pt-[75px] pl-[112px]">
      <div className="w-[3457px] h-[2028px] rounded-[24px] border-2 border-[#1c1c1c] overflow-hidden flex flex-col bg-white shadow-[0_46px_90px_rgba(0,0,0,0.55)]">
        <div className="h-[79px] shrink-0 flex bg-[#3c3c3c]">
          <div className="w-[1130px] shrink-0 bg-[#1f2120] rounded-br-[24px] flex items-start pt-[23px]">
            <div className="flex items-center gap-[16px] pl-[41px] w-[177px] pt-[5px] shrink-0">
              <div className="w-[24px] h-[24px] rounded-full bg-[#f26d60] shrink-0" />
              <div className="w-[24px] h-[24px] rounded-full bg-[#f7c04b] shrink-0" />
              <div className="w-[24px] h-[24px] rounded-full bg-[#62c554] shrink-0" />
            </div>
            <div className="flex">{leftTabs.map((k, i) => <TabCell key={i} k={k} wide />)}</div>
          </div>
          <div className="w-[64px] shrink-0 bg-[#1f2120]">
            <div className="mt-[11px] h-[68px] bg-[#3c3c3c] rounded-t-[20px] flex items-center justify-center">
              <XIcon size={16} color="#e4e4e4" sw={2.6} />
            </div>
          </div>
          <div className="flex-1 bg-[#1f2120] rounded-bl-[24px] flex items-start pt-[23px] pl-[7px] relative">
            <div className="flex">{rightTabs.map((k, i) => <TabCell key={i} k={k} />)}</div>
            <Plus size={36} strokeWidth={2.2} className="ml-[15px] text-[#c7c7c7] shrink-0" />
            <div className="ml-[119px] -mt-[12px] w-[54px] h-[55px] rounded-[18px] bg-[#3c3c3c] flex items-center justify-center shrink-0">
              <ChevronDown size={28} strokeWidth={2.6} className="text-[#e4e4e4]" />
            </div>
          </div>
        </div>
        <div className="h-[92px] shrink-0 bg-[#1f2120]">
          <div className="h-full bg-[#3c3c3c] rounded-t-[14px] border-b-2 border-[#4b4b4b] flex items-center pl-[5px]">
            <div className="w-[72.5px] flex justify-center"><ArrowLeft size={40} strokeWidth={2} className="text-[#c7c7c7]" /></div>
            <div className="w-[72.5px] flex justify-center"><ArrowRight size={40} strokeWidth={2} className="text-[#7a7a7a]" /></div>
            <div className="w-[72.5px] flex justify-center"><RotateCw size={36} strokeWidth={2.2} className="text-[#c7c7c7]" /></div>
            <div className="ml-[16px] w-[1931px] h-[68px] rounded-full bg-[#282828] flex items-center pl-[10px] pr-[30px] shrink-0">
              <div className="w-[48px] h-[48px] rounded-full bg-[#3c3c3c] flex items-center justify-center shrink-0">
                <svg width="26" height="26" viewBox="0 0 26 26"><g fill="none" stroke="#d6d6d6" strokeWidth="2.4"><circle cx="7" cy="7" r="3.5" /><path d="M14 7h10M2 19h10" /><circle cx="19" cy="19" r="3.5" /></g></svg>
              </div>
              <span className="ml-[17px] pt-[2px] text-[27.8px] text-[#e3e3e3] whitespace-nowrap" style={{ fontFamily: "Inter, sans-serif" }}>https://us-east-1.console.aws.amazon.com/iam/home?region=eu-central-1#/users</span>
              <Star size={34} strokeWidth={2.4} className="ml-auto text-[#c7c7c7]" />
            </div>
            <div className="ml-[16px] flex items-center">
              <Extensions />
            </div>
          </div>
        </div>
        <TopNav />
        <div className="flex-1 flex min-h-0" style={ui}>
          <Sidebar />
          <main className="flex-1 bg-[#f1f3f3] min-w-0">
            <div className="h-[96px] bg-[#3c7d23] flex items-center pl-[24px] pr-[36px] shadow-[0_1px_3px_rgba(0,0,0,0.3)]">
              <CheckIcon size={32} color="#fff" />
              <span className="ml-[14px] text-[27.4px] font-semibold text-white">User "andrii-boiko-s3-test-user" deleted.</span>
              <div className="ml-auto"><XIcon size={26} color="#eef2ec" /></div>
            </div>
            <div className="h-[60px] mt-[33px] ml-[80px] flex items-center text-[27px]">
              <span className="text-[#2a6db5] border-b-2 border-[#2a6db5] leading-[34px]">IAM</span>
              <svg width="18" height="26" viewBox="0 0 18 26" className="ml-[20px] shrink-0"><path d="M3 2l11 11L3 24" fill="none" stroke="#545b64" strokeWidth="3" /></svg>
              <span className="ml-[22px] font-semibold text-[#687078]">Users</span>
            </div>
            <Card />
          </main>
          <div className="w-[80px] shrink-0 bg-white border-l-2 border-[#d5dbdb] flex flex-col">
            <div className="h-[81px] border-b-2 border-[#d5dbdb] flex items-center justify-center">
              <Info size={38} strokeWidth={2.4} className="text-[#545b64]" />
            </div>
            <div className="h-[81px] flex items-center justify-center">
              <svg width="30" height="32" viewBox="0 0 30 32"><path d="M15 2l12 7v14l-12 7-12-7V9z" fill="none" stroke="#545b64" strokeWidth="3" /><circle cx="14" cy="16" r="3.6" fill="#545b64" /><path d="M14 16l11 6" stroke="#545b64" strokeWidth="3" /></svg>
            </div>
          </div>
        </div>
        <div className="h-[62px] shrink-0 bg-[#262f3e] border-t-2 border-[#414750] flex items-center pl-[30px] pr-[29px] text-[23.3px] text-white" style={ui}>
          <ShellIcon />
          <span className="ml-[10px]">CloudShell</span>
          <span className="ml-[50px]">Feedback</span>
          <span className="ml-auto">© 2024, Amazon Web Services, Inc. or its affiliates.</span>
          <span className="ml-[60px]">Privacy</span>
          <span className="ml-[50px]">Terms</span>
          <span className="ml-[50px]">Cookie preferences</span>
        </div>
      </div>
    </div>
  );
}
